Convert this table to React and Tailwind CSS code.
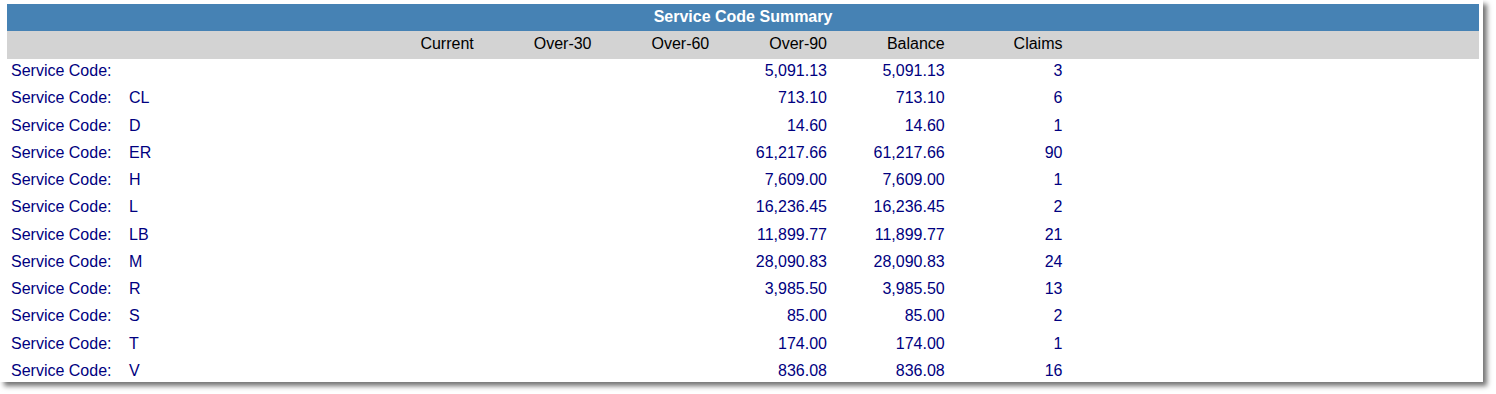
const rows = [
  { code: "", over90: "5,091.13", balance: "5,091.13", claims: "3" },
  { code: "CL", over90: "713.10", balance: "713.10", claims: "6" },
  { code: "D", over90: "14.60", balance: "14.60", claims: "1" },
  { code: "ER", over90: "61,217.66", balance: "61,217.66", claims: "90" },
  { code: "H", over90: "7,609.00", balance: "7,609.00", claims: "1" },
  { code: "L", over90: "16,236.45", balance: "16,236.45", claims: "2" },
  { code: "LB", over90: "11,899.77", balance: "11,899.77", claims: "21" },
  { code: "M", over90: "28,090.83", balance: "28,090.83", claims: "24" },
  { code: "R", over90: "3,985.50", balance: "3,985.50", claims: "13" },
  { code: "S", over90: "85.00", balance: "85.00", claims: "2" },
  { code: "T", over90: "174.00", balance: "174.00", claims: "1" },
  { code: "V", over90: "836.08", balance: "836.08", claims: "16" }
];

const columns = ["Current", "Over-30", "Over-60", "Over-90", "Balance", "Claims"];

const gridCols = "grid grid-cols-[353px_repeat(6,117.76px)_1fr]";

export default function App() {
  return (
    <div className="min-h-[394px] bg-white font-['Liberation_Sans',Arial,sans-serif] text-[16px]">
      <div className="h-[382px] w-[1483px] overflow-hidden bg-white pl-[7px] pr-1 pt-1 shadow-[4px_4px_5px_rgba(0,0,0,0.55)]">
        <div className="flex h-[27px] items-center justify-center bg-[#4682b4] pb-px font-bold text-white">
          Service Code Summary
        </div>

        <div className={`${gridCols} h-[28px] items-center bg-[#d3d3d3] pb-[3px] text-black`}>
          <div />
          {columns.map((col) => (
            <div key={col} className="pr-1 text-right">
              {col}
            </div>
          ))}
          <div />
        </div>

        {rows.map((row, i) => (
          <div key={i} className={`${gridCols} h-[27.27px] leading-[24px] text-[#000080]`}>
            <div className="flex pl-1">
              <span className="w-[118px] shrink-0">Service Code:</span>
              <span>{row.code}</span>
            </div>
            <div />
            <div />
            <div />
            <div className="pr-1 text-right">{row.over90}</div>
            <div className="pr-1 text-right">{row.balance}</div>
            <div className="pr-1 text-right">{row.claims}</div>
            <div />
          </div>
        ))}
      </div>
    </div>
  );
}
